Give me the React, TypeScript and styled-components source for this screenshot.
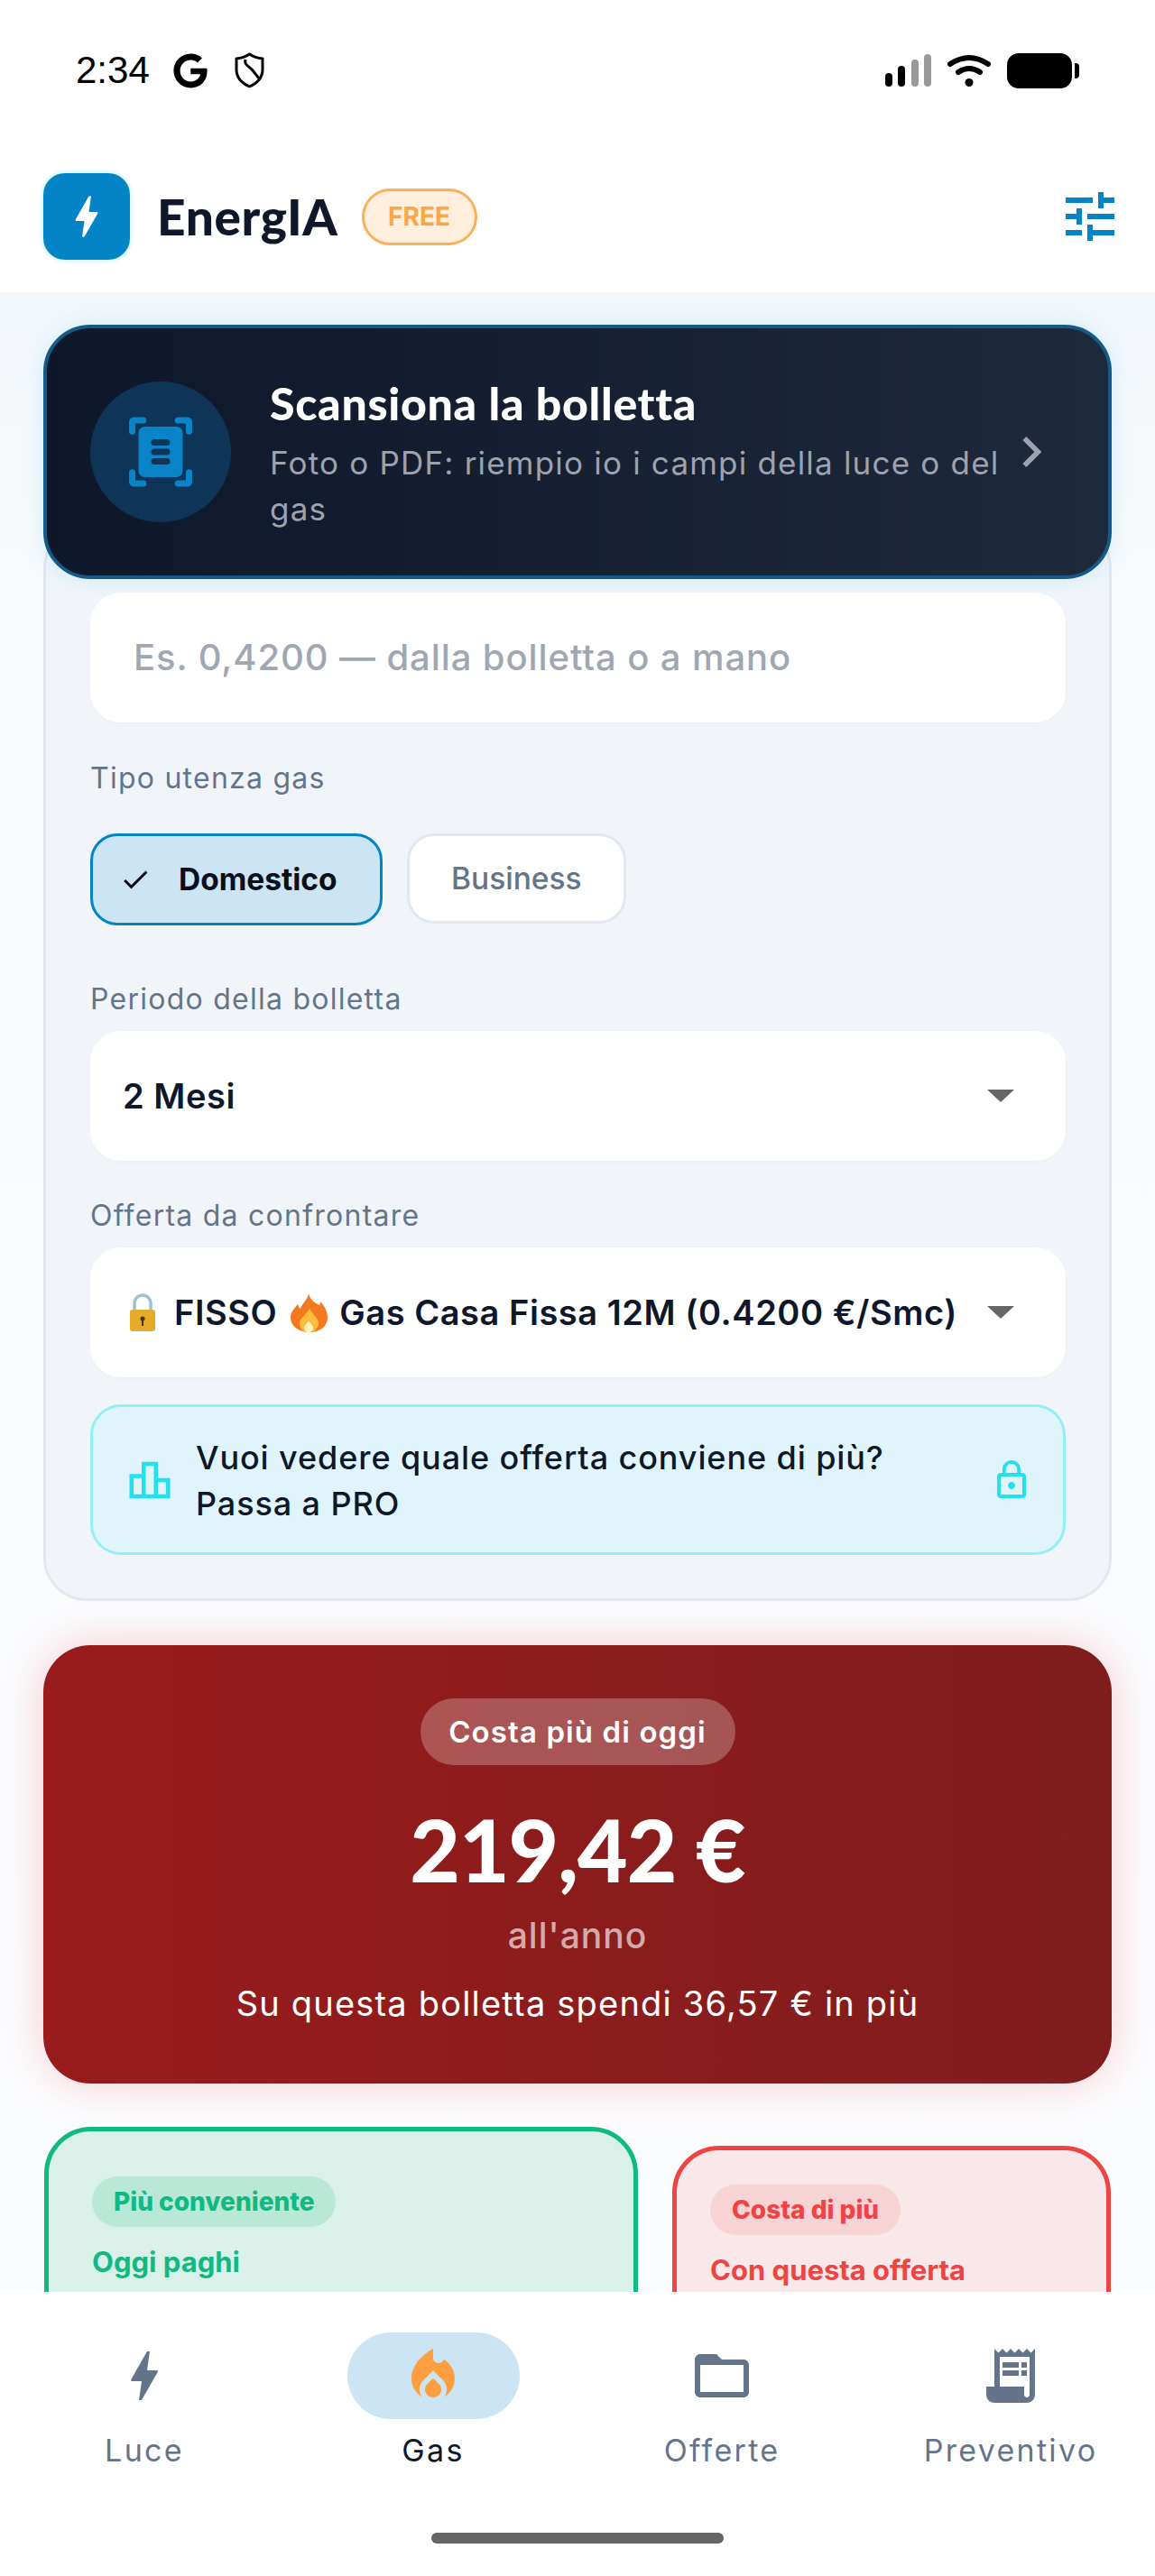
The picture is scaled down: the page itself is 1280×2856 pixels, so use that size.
import React from 'react';
import styled, { createGlobalStyle } from 'styled-components';

const Global = createGlobalStyle`
  html, body { margin: 0; padding: 0; background: #fff; }
  * { box-sizing: border-box; }
`;

const Screen = styled.div`
  width: 1280px; height: 2856px; display: flex; flex-direction: column; overflow: hidden;
  background: #fff; font-family: Inter, "Noto Sans", sans-serif; color: #0f172a;
`;
const StatusBar = styled.div`
  height: 156px; flex: none; display: flex; align-items: center; justify-content: space-between;
  padding: 0 84px 0 84px;
`;
const StatusGroup = styled.div`display: flex; align-items: center; gap: ${p => p.$gap}px;`;
const Time = styled.span`
  font-family: "Liberation Sans", sans-serif; font-size: 42px; color: #000; line-height: 1; margin-right: -4px;
`;
const Header = styled.header`
  height: 168px; flex: none; display: flex; align-items: center; padding: 0 36px 0 48px;
`;
const Logo = styled.div`
  width: 96px; height: 96px; border-radius: 24px; background: #0284c7; display: flex; align-items: center;
  justify-content: center; box-shadow: 0 0 6px rgba(34, 211, 238, .35);
`;
const Brand = styled.h1`
  font-family: Lato, sans-serif; font-weight: 900; font-size: 55px; line-height: 1; margin: 0 0 0 30px; color: #0f172a; letter-spacing: .6px;
`;
const FreeBadge = styled.span`
  margin-left: 26px; width: 128px; height: 63px; border-radius: 32px; border: 3px solid #fdb05a; background: #ffefdc;
  color: #fba748; font-size: 28px; font-weight: 700; display: flex; align-items: center; justify-content: center;
`;
const HeaderSpacer = styled.div`flex: 1;`;
const Main = styled.main`
  flex: 1; min-height: 0; overflow: hidden; padding: 36px 48px 0;
  background: linear-gradient(180deg, #f2f7fb 0, #f8fafc 15%, #fbfcfe 100%);
`;
const ScanCard = styled.section`
  position: relative; z-index: 2; height: 282px; border-radius: 52px; border: 4px solid #145a86;
  background: linear-gradient(90deg, #0f172a, #1e293b); display: flex; align-items: center; padding: 0 0 0 48px;
  box-shadow: 0 0 24px rgba(56, 189, 248, .18);
`;
const ScanCircle = styled.div`
  width: 156px; height: 156px; border-radius: 50%; background: #0e3557; flex: none; display: flex; align-items: center; justify-content: center;
`;
const ScanText = styled.div`flex: 1; margin-left: 43px; padding-top: 4px; max-width: 810px;`;
const ScanTitle = styled.h2`
  font-family: Lato, sans-serif; font-weight: 900; font-size: 50px; line-height: 60px; color: #fff; margin: 0 0 11px; letter-spacing: .7px;
`;
const ScanSub = styled.p`
  margin: 0; font-size: 35px; line-height: 51px; color: #9ca3af; letter-spacing: 1.2px;
`;
const FormCard = styled.section`
  margin-top: -60px; border: 3px solid #e2e8f0; border-radius: 48px; background: #f1f5f9; padding: 72px 48px 48px 49px;
`;
const InputBox = styled.div`
  height: 144px; border-radius: 34px; background: #fff; display: flex; align-items: center; padding: 0 48px 2px;
  font-size: 40px; font-weight: 500; color: #a0a7b3; box-shadow: 0 2px 6px rgba(15, 23, 42, .02); letter-spacing: .9px;
`;
const Label = styled.div`
  font-size: 32px; line-height: 40px; color: #64748b; letter-spacing: 1.25px;
  margin-top: ${p => p.$top}px; margin-bottom: ${p => p.$bottom}px;
`;
const Chips = styled.div`display: flex; align-items: flex-start; gap: 27px;`;
const Chip = styled.div`
  width: ${p => (p.$on ? 324 : 243)}px; height: ${p => (p.$on ? 102 : 100)}px; border-radius: 30px; display: flex; align-items: center;
  border: 3px solid ${p => (p.$on ? '#0284c7' : '#e2e8f0')};
  background: ${p => (p.$on ? '#cce5f4' : '#fff')};
  color: ${p => (p.$on ? '#0a0f1c' : '#64748b')};
  font-size: 33.5px;
  font-weight: ${p => (p.$on ? 700 : 500)};
  padding-left: ${p => (p.$on ? 29 : 46)}px;
`;
const ChipLabel = styled.span`margin-left: ${p => p.$left}px;`;
const SelectBox = styled.div`
  height: 144px; border-radius: 34px; background: #fff; display: flex; align-items: center; justify-content: space-between;
  padding: 0 57px 0 36px; font-size: 38px; font-weight: 600; color: #0f172a; box-shadow: 0 2px 6px rgba(15, 23, 42, .02);
  letter-spacing: .55px;
`;
const SelectValue = styled.div`display: flex; align-items: center;`;
const Caret = styled.span`
  width: 0; height: 0; border-left: 15px solid transparent; border-right: 15px solid transparent; border-top: 14px solid #666;
`;
const Promo = styled.div`
  margin-top: 30px; height: 167px; border-radius: 34px; border: 3px solid #93eff6; background: #e0f5fb;
  display: flex; align-items: center; padding: 0 33px 0 36px;
`;
const PromoText = styled.div`
  flex: 1; margin-left: 24px; padding-top: 2px; font-size: 36px; line-height: 51px; font-weight: 500; color: #0f172a; letter-spacing: .9px;
`;
const RedCard = styled.section`
  margin-top: 49px; height: 486px; border-radius: 52px; background: linear-gradient(90deg, #991b1b, #7f1d1d);
  box-shadow: 0 0 48px rgba(239, 68, 68, .24); display: flex; flex-direction: column; align-items: center; padding-top: 59px; color: #fff;
`;
const RedPill = styled.div`
  height: 74px; width: 349px; border-radius: 37px; background: rgba(255, 255, 255, .25); display: flex; align-items: center;
  justify-content: center; font-size: 33px; font-weight: 600; letter-spacing: 1.1px;
`;
const Amount = styled.div`
  font-family: Lato, sans-serif; font-weight: 900; font-size: 96px; line-height: 120px; margin-top: 33px; letter-spacing: -1px;
`;
const PerYear = styled.div`
  font-size: 39px; line-height: 50px; font-weight: 500; color: rgba(255, 255, 255, .65); margin-top: 11px; letter-spacing: 1px;
`;
const Delta = styled.div`font-size: 38px; line-height: 50px; margin-top: 25px; letter-spacing: 1.2px;`;
const Compare = styled.div`
  margin-top: 48px; display: flex; align-items: flex-start; justify-content: space-between; margin-left: 1px; margin-right: 1px;
`;
const CompareCard = styled.div`
  width: ${p => p.$w}px; height: 300px; margin-top: ${p => p.$top}px; border-radius: 52px; border: 5px solid ${p => p.$c};
  background: ${p => p.$bg}; padding: ${p => p.$pad}px 0 0 ${p => p.$left}px; color: ${p => p.$c};
`;
const ComparePill = styled.div`
  display: inline-flex; align-items: center; height: 56px; padding: 0 24px; border-radius: 28px; background: ${p => p.$bg};
  font-size: 28px; font-weight: 800;
`;
const CompareLabel = styled.div`font-size: 31px; font-weight: 700; line-height: 40px; margin-top: ${p => p.$top}px;`;
const Nav = styled.nav`
  height: 315px; flex: none; background: #fff; display: grid; grid-template-columns: repeat(4, 320px); padding-top: 45px;
  position: relative;
`;
const NavItem = styled.div`display: flex; flex-direction: column; align-items: center;`;
const NavPill = styled.div`
  width: 191px; height: 96px; border-radius: 48px; display: flex; align-items: center; justify-content: center;
  background: ${p => (p.$on ? '#cbe5f4' : 'transparent')};
`;
const NavLabel = styled.span`
  margin-top: 14px; font-size: 34px; line-height: 42px; letter-spacing: 2.3px; color: ${p => (p.$on ? '#0f172a' : '#64748b')};
`;
const HomeBar = styled.div`
  position: absolute; left: 478px; bottom: 36px; width: 324px; height: 12px; border-radius: 6px; background: #666;
`;

const Mi = ({ size, color, d }: { size: number; color: string; d: string }) => (
  <svg width={size} height={size} viewBox="0 0 24 24" fill={color}><path d={d} /></svg>
);
const P = {
  bolt: 'M11 21h-1l1-7H7.5c-.58 0-.57-.32-.38-.66.19-.34.05-.08.07-.12C8.48 10.94 10.42 7.54 13 3h1l-1 7h3.5c.49 0 .56.33.47.51l-.07.15C12.96 17.55 11 21 11 21z',
  tune: 'M3 17v2h6v-2H3zM3 5v2h10V5H3zm10 16v-2h8v-2h-8v-2h-2v6h2zM7 9v2H3v2h4v2h2V9H7zm14 4v-2H11v2h10zm-6-4h2V7h4V5h-4V3h-2v6z',
  chevron: 'M10 6L8.59 7.41 13.17 12l-4.58 4.59L10 18l6-6z',
  check: 'M9 16.17L4.83 12l-1.41 1.41L9 19 21 7l-1.41-1.41z',
  board: 'M16 11V3H8v6H2v12h20V11h-6zm-6-6h4v14h-4V5zm-6 6h4v8H4v-8zm16 8h-4v-6h4v6z',
  lock: 'M12 17c1.1 0 2-.9 2-2s-.9-2-2-2-2 .9-2 2 .9 2 2 2zm6-9h-1V6c0-2.76-2.24-5-5-5S7 3.24 7 6v2H6c-1.1 0-2 .9-2 2v10c0 1.1.9 2 2 2h12c1.1 0 2-.9 2-2V10c0-1.1-.9-2-2-2zM8.9 6c0-1.71 1.39-3.1 3.1-3.1 1.71 0 3.1 1.39 3.1 3.1v2H8.9V6zM18 20H6V10h12v10z',
  fire: 'M12 12.9l-2.13 2.09C9.31 15.55 9 16.28 9 17.06 9 18.68 10.35 20 12 20s3-1.32 3-2.94c0-.78-.31-1.52-.87-2.07L12 12.9zM16 6l-.44.55C14.38 8.02 12 7.19 12 5.3V2s-8 4-8 11c0 2.92 1.56 5.47 3.89 6.86C7.33 19.07 7 18.1 7 17.06c0-1.32.52-2.56 1.47-3.5L12 10.1l3.53 3.47c.95.93 1.47 2.17 1.47 3.5 0 1.02-.31 1.96-.85 2.75 1.89-1.15 3.29-3.06 3.71-5.3C20.52 10.97 18.79 7.62 16 6z',
  folder: 'M20 6h-8l-2-2H4c-1.1 0-1.99.9-1.99 2L2 18c0 1.1.9 2 2 2h16c1.1 0 2-.9 2-2V8c0-1.1-.9-2-2-2zm0 12H4V8h16v10z',
  receipt: 'M19.5 3.5 18 2l-1.5 1.5L15 2l-1.5 1.5L12 2l-1.5 1.5L9 2 7.5 3.5 6 2v14H3v3c0 1.66 1.34 3 3 3h12c1.66 0 3-1.34 3-3V2l-1.5 1.5zM19 19c0 .55-.45 1-1 1s-1-.45-1-1v-3H8V5h11v14zM9 7h6v2H9zm7 0h2v2h-2zm-7 3h6v2H9zm7 0h2v2h-2z',
};

const GoogleG = () => (
  <svg width="38" height="39" viewBox="0 0 488 512" fill="#000">
    <path d="M488 261.8C488 403.3 391.1 504 248 504 110.8 504 0 393.2 0 256S110.8 8 248 8c66.8 0 123 24.5 166.3 64.9l-67.5 64.9C258.5 52.6 94.3 116.6 94.3 256c0 86.5 69.1 156.6 153.7 156.6 98.2 0 135-70.4 140.8-106.9H248v-85.3h236.1c2.3 12.7 3.9 24.9 3.9 41.4z" />
  </svg>
);
const Shield = () => (
  <svg width="33" height="40" viewBox="0 0 33 40" fill="none" stroke="#000" strokeWidth="3" strokeLinejoin="round">
    <path d="M16.5 2C21 5 26 6.5 31 7v12c0 9-6.5 15.5-14.5 19C8.500 34.500 2 28 2 19V7c5-.5 10-2 14.500-5z" />
    <path d="M12 8c-2 6 5 8 8 12 3 4 5 6 7 9" />
  </svg>
);
const Signal = () => (
  <svg width="51" height="36" viewBox="0 0 51 36">
    <rect x="0" y="21" width="8" height="15" rx="4" fill="#000" />
    <rect x="14" y="13" width="8" height="23" rx="4" fill="#000" />
    <rect x="29" y="6" width="8" height="30" rx="4" fill="#999" />
    <rect x="43" y="0" width="8" height="36" rx="4" fill="#999" />
  </svg>
);
const Wifi = () => (
  <svg width="48" height="36" viewBox="0 0 48 36" fill="none" stroke="#000" strokeWidth="6" strokeLinecap="round">
    <path d="M3 11Q24-3 45 11" />
    <path d="M12 20Q24 12 36 20" />
    <circle cx="24" cy="31.500" r="4.500" fill="#000" stroke="none" />
  </svg>
);
const Battery = () => (
  <svg width="80" height="39" viewBox="0 0 80 39" fill="#000">
    <rect x="0" y="0" width="72" height="39" rx="13" />
    <path d="M75 11h1a4 4 0 0 1 4 4v9a4 4 0 0 1-4 4h-1z" />
  </svg>
);
const ScanIcon = () => (
  <svg width="84" height="84" viewBox="0 0 24 24" fill="#0a84c9">
    <path d="M2 5.500V2.500A1.500 1.500 0 0 1 3.500 1H6.500a1 1 0 0 1 0 2H4v2.500a1 1 0 0 1-2 0zM22 5.500V2.500A1.500 1.500 0 0 0 20.500 1H17.500a1 1 0 0 0 0 2H20v2.500a1 1 0 0 0 2 0zM2 18.500v3A1.500 1.500 0 0 0 3.500 23H6.500a1 1 0 0 0 0-2H4v-2.500a1 1 0 0 0-2 0zM22 18.500v3a1.500 1.500 0 0 1-1.500 1.500H17.500a1 1 0 0 1 0-2H20v-2.500a1 1 0 0 1 2 0z" />
    <rect x="5" y="4" width="14" height="16" rx="2" />
    <g fill="#0e3557">
      <rect x="9" y="8" width="6" height="2" rx="1" />
      <rect x="9" y="11" width="6" height="2" rx="1" />
      <rect x="9" y="14" width="6" height="2" rx="1" />
    </g>
  </svg>
);
const LockEmoji = () => (
  <svg width="30" height="42" viewBox="0 0 30 42" style={{ margin: '0 20px 0 7px' }}>
    <path d="M6 20V11a9 9 0 0 1 18 0v9" fill="none" stroke="#9fc0d4" strokeWidth="3.500" />
    <rect x="1" y="18" width="28" height="24" rx="3" fill="#e5ab2b" />
    <circle cx="15" cy="28" r="2.500" fill="#4a3508" />
    <rect x="14" y="28" width="2" height="8" fill="#4a3508" />
  </svg>
);
const FlameEmoji = () => (
  <svg width="41" height="43" viewBox="0 0 41 43" style={{ margin: '0 13px 0 15px' }}>
    <path d="M20 0c2 9 9 11 12 13 1-1 1-3 1-4 6 6 8 13 8 18 0 9-8 16-20 16S0 36 0 27c0-7 5-11 8-15 1 2 1 4 3 5 2-6 8-10 9-17z" fill="#f4781f" />
    <path d="M21 16c1 5 10 11 10 17 0 6-5 10-11 10S10 39 10 33c0-6 9-10 11-17z" fill="#fdbb3b" />
    <path d="M20 30c1 3 5 5 5 8 0 3-2 5-5 5s-5-2-5-5c0-3 4-5 5-8z" fill="#fff3c4" />
  </svg>
);

export default function App() {
  return (
    <Screen>
      <Global />
      <StatusBar>
        <StatusGroup $gap={30}>
          <Time>2:34</Time>
          <GoogleG />
          <Shield />
        </StatusGroup>
        <StatusGroup $gap={18}>
          <Signal />
          <Wifi />
          <Battery />
        </StatusGroup>
      </StatusBar>
      <Header>
        <Logo><Mi size={60} color="#fff" d={P.bolt} /></Logo>
        <Brand>EnergIA</Brand>
        <FreeBadge>FREE</FreeBadge>
        <HeaderSpacer />
        <Mi size={72} color="#0284c7" d={P.tune} />
      </Header>
      <Main>
        <ScanCard>
          <ScanCircle><ScanIcon /></ScanCircle>
          <ScanText>
            <ScanTitle>Scansiona la bolletta</ScanTitle>
            <ScanSub>Foto o PDF: riempio io i campi della luce o del gas</ScanSub>
          </ScanText>
          <Mi size={68} color="#9ca3af" d={P.chevron} />
        </ScanCard>
        <FormCard>
          <InputBox>Es. 0,4200 — dalla bolletta o a mano</InputBox>
          <Label $top={42} $bottom={41}>Tipo utenza gas</Label>
          <Chips>
            <Chip $on>
              <Mi size={36} color="#0a0f1c" d={P.check} />
              <ChipLabel $left={30}>Domestico</ChipLabel>
            </Chip>
            <Chip>Business</Chip>
          </Chips>
          <Label $top={62} $bottom={15}>Periodo della bolletta</Label>
          <SelectBox>
            <SelectValue>2 Mesi</SelectValue>
            <Caret />
          </SelectBox>
          <Label $top={41} $bottom={15}>Offerta da confrontare</Label>
          <SelectBox>
            <SelectValue>
              <LockEmoji />FISSO<FlameEmoji />Gas Casa Fissa 12M (0.4200 €/Smc)
            </SelectValue>
            <Caret />
          </SelectBox>
          <Promo>
            <Mi size={54} color="#22e0ee" d={P.board} />
            <PromoText>Vuoi vedere quale offerta conviene di più?<br />Passa a PRO</PromoText>
            <Mi size={48} color="#22e0ee" d={P.lock} />
          </Promo>
        </FormCard>
        <RedCard>
          <RedPill>Costa più di oggi</RedPill>
          <Amount>219,42 €</Amount>
          <PerYear>all'anno</PerYear>
          <Delta>Su questa bolletta spendi 36,57 € in più</Delta>
        </RedCard>
        <Compare>
          <CompareCard $w={658} $top={0} $c="#10b981" $bg="#d9f1e9" $pad={50} $left={48}>
            <ComparePill $bg="#b9e8d7">Più conveniente</ComparePill>
            <CompareLabel $top={19}>Oggi paghi</CompareLabel>
          </CompareCard>
          <CompareCard $w={486} $top={21} $c="#ef4444" $bg="#f8e8ea" $pad={38} $left={37}>
            <ComparePill $bg="#f8d3d5">Costa di più</ComparePill>
            <CompareLabel $top={19}>Con questa offerta</CompareLabel>
          </CompareCard>
        </Compare>
      </Main>
      <Nav>
        <NavItem>
          <NavPill><Mi size={72} color="#64748b" d={P.bolt} /></NavPill>
          <NavLabel>Luce</NavLabel>
        </NavItem>
        <NavItem>
          <NavPill $on><Mi size={72} color="#fd9f40" d={P.fire} /></NavPill>
          <NavLabel $on>Gas</NavLabel>
        </NavItem>
        <NavItem>
          <NavPill><Mi size={72} color="#64748b" d={P.folder} /></NavPill>
          <NavLabel>Offerte</NavLabel>
        </NavItem>
        <NavItem>
          <NavPill><Mi size={72} color="#64748b" d={P.receipt} /></NavPill>
          <NavLabel>Preventivo</NavLabel>
        </NavItem>
        <HomeBar />
      </Nav>
    </Screen>
  );
}
